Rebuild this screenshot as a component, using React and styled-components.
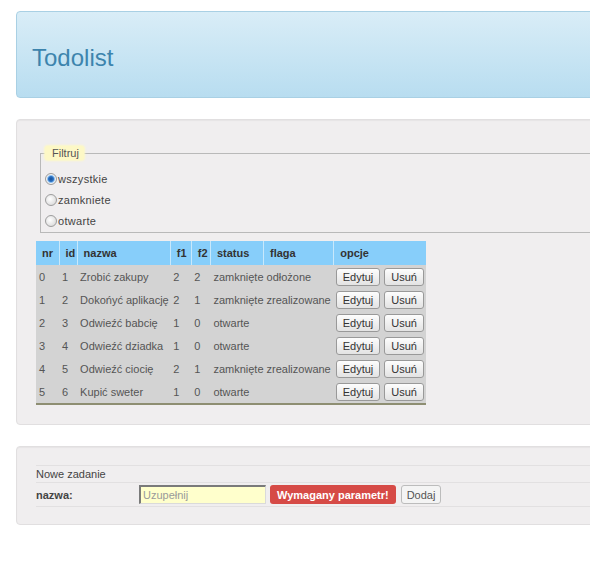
import React, { useState } from "react";
import styled, { createGlobalStyle } from "styled-components";

const GlobalStyle = createGlobalStyle`
  html, body {
    margin: 0;
    padding: 0;
    overflow: hidden;
    background: #fff;
    font-family: "Liberation Sans", Arial, sans-serif;
  }
`;

const Page = styled.div`
  width: 960px;
  padding: 11px 0 0 16px;
  display: flex;
  flex-direction: column;
  gap: 21px;
`;

const Hero = styled.div`
  box-sizing: border-box;
  height: 87px;
  padding: 34px 15px 0;
  background: linear-gradient(#d9edf7, #b8ddf0);
  border: 1px solid #a9d0e4;
  border-radius: 4px;
`;

const Title = styled.h1`
  margin: 0;
  font-size: 24px;
  line-height: 24px;
  font-weight: normal;
  color: #3d84ad;
`;

const Well = styled.div`
  padding: ${(p) => p.$pad || "19px"};
  background: #f0eeef;
  border: 1px solid #e1dfe0;
  border-radius: 4px;
  box-shadow: inset 0 1px 1px rgba(0, 0, 0, 0.04);
`;

const Fieldset = styled.fieldset`
  margin: 7px 0 8px 4px;
  padding: 8px 4px 1px;
  border: 1px solid #b9b9b9;
`;

const Legend = styled.legend`
  padding: 0 5px 0 7px;
  line-height: 14px;
  font-size: 11px;
  color: #555;
  background: #fdf8c6;
  border-radius: 3px;
  box-shadow: 0 0 2px 1px #fdf8c6;
`;

const RadioRow = styled.label`
  display: flex;
  align-items: center;
  height: 21px;
  font-size: 11px;
  letter-spacing: 0.3px;
  color: #444;
`;

const Radio = styled.input`
  appearance: none;
  box-sizing: border-box;
  width: 12px;
  height: 12px;
  margin: 0 1px 0 0;
  border-radius: 50%;
  border: 1px solid #9d9d9d;
  background: radial-gradient(circle at 40% 40%, #ffffff, #d2d2d2);

  &:checked {
    background: radial-gradient(circle, #1a4f94 0, #2b72c4 2.5px, #8fc0ef 3.5px, #f4f4f4 4.5px, #d6d6d6 6px);
  }
`;

const Grid = styled.table`
  width: 390px;
  table-layout: fixed;
  border-collapse: collapse;
  font-size: 11px;
`;

const Th = styled.th`
  height: 24px;
  padding: 0 0 0 6px;
  text-align: left;
  font-weight: bold;
  color: #333;
  background: lightskyblue;
  border-left: 1px solid #c8e8fb;

  &:first-child {
    border-left: none;
  }
`;

const Td = styled.td`
  height: 23px;
  padding: 0 0 0 ${(p) => p.$inset || "3px"};
  white-space: nowrap;
  overflow: hidden;
  color: #555;
  background: #d3d3d3;
`;

const Row = styled.tr`
  &:last-child td {
    border-bottom: 2px solid #8e8e72;
  }
`;

const SmallButton = styled.button`
  height: 18px;
  padding: 0 6px;
  margin-right: 4px;
  font-family: inherit;
  font-size: 11px;
  color: #333;
  border: 1px solid #999;
  border-radius: 3px;
  background: linear-gradient(#fdfdfd, #e3e3e3);
  vertical-align: middle;
`;

const FormTable = styled.table`
  width: 100%;
  border-collapse: collapse;
  font-size: 11px;
`;

const FormRow = styled.tr`
  border-top: 1px solid #e2e0e1;

  &:last-child {
    border-bottom: 1px solid #e2e0e1;
  }
`;

const FormCell = styled.td`
  padding: 0;
  height: ${(p) => p.$h || "16px"};
  width: ${(p) => p.$w || "auto"};
  color: #444;
  font-weight: ${(p) => (p.$bold ? "bold" : "normal")};
`;

const Controls = styled.div`
  display: flex;
  align-items: center;
`;

const NameInput = styled.input`
  box-sizing: border-box;
  width: 127px;
  height: 19px;
  padding: 0 2px;
  font-family: inherit;
  font-size: 11px;
  background: #ffffcc;
  border-style: solid;
  border-width: 2px 1px 1px 2px;
  border-color: #7a7a7a #dadada #dadada #7a7a7a;
  outline: none;

  &::placeholder {
    color: #9a9a9a;
  }
`;

const ErrorTag = styled.span`
  display: inline-flex;
  align-items: center;
  height: 19px;
  margin-left: 4px;
  padding: 0 7px;
  font-size: 11px;
  font-weight: bold;
  color: #fff;
  background: #d64a46;
  border-radius: 3px;
`;

const AddButton = styled.button`
  height: 19px;
  margin-left: 5px;
  padding: 0 5px;
  font-family: inherit;
  font-size: 11px;
  color: #555;
  background: #f4f4f4;
  border: 1px solid #bcbcbc;
  border-radius: 3px;
`;

const columns = [
  ["nr", 23],
  ["id", 18],
  ["nazwa", 93],
  ["f1", 21],
  ["f2", 19],
  ["status", 53],
  ["flaga", 70],
  ["opcje", 92],
];

const tasks = [
  { id: 1, name: "Zrobić zakupy", f1: 2, f2: 2, status: "zamknięte", flag: "odłożone" },
  { id: 2, name: "Dokońyć aplikację", f1: 2, f2: 1, status: "zamknięte", flag: "zrealizowane" },
  { id: 3, name: "Odwieźć babcię", f1: 1, f2: 0, status: "otwarte", flag: "" },
  { id: 4, name: "Odwieźć dziadka", f1: 1, f2: 0, status: "otwarte", flag: "" },
  { id: 5, name: "Odwieźć ciocię", f1: 2, f2: 1, status: "zamknięte", flag: "zrealizowane" },
  { id: 6, name: "Kupić sweter", f1: 1, f2: 0, status: "otwarte", flag: "" },
];

const filters = ["wszystkie", "zamkniete", "otwarte"];

const App = () => {
  const [filter, setFilter] = useState("wszystkie");

  return (
    <Page>
      <GlobalStyle />
      <Hero>
        <Title>Todolist</Title>
      </Hero>

      <Well $pad="19px 19px 19px">
        <Fieldset>
          <Legend>Filtruj</Legend>
          {filters.map((f) => (
            <RadioRow key={f}>
              <Radio
                type="radio"
                name="filter"
                checked={filter === f}
                onChange={() => setFilter(f)}
              />
              {f}
            </RadioRow>
          ))}
        </Fieldset>

        <Grid>
          <colgroup>
            {columns.map(([name, w]) => (
              <col key={name} style={{ width: w }} />
            ))}
          </colgroup>
          <thead>
            <tr>
              {columns.map(([name]) => (
                <Th key={name}>{name}</Th>
              ))}
            </tr>
          </thead>
          <tbody>
            {tasks.map((t, i) => (
              <Row key={t.id}>
                <Td>{i}</Td>
                <Td>{t.id}</Td>
                <Td>{t.name}</Td>
                <Td>{t.f1}</Td>
                <Td>{t.f2}</Td>
                <Td>{t.status}</Td>
                <Td>{t.flag}</Td>
                <Td $inset="2px">
                  <SmallButton>Edytuj</SmallButton>
                  <SmallButton>Usuń</SmallButton>
                </Td>
              </Row>
            ))}
          </tbody>
        </Grid>
      </Well>

      <Well $pad="18px 19px 17px">
        <FormTable>
          <tbody>
            <FormRow>
              <FormCell colSpan={2}>Nowe zadanie</FormCell>
            </FormRow>
            <FormRow>
              <FormCell $h="23px" $w="103px" $bold>
                nazwa:
              </FormCell>
              <FormCell $h="23px">
                <Controls>
                  <NameInput placeholder="Uzupełnij" />
                  <ErrorTag>Wymagany parametr!</ErrorTag>
                  <AddButton>Dodaj</AddButton>
                </Controls>
              </FormCell>
            </FormRow>
          </tbody>
        </FormTable>
      </Well>
    </Page>
  );
};

export default App;
